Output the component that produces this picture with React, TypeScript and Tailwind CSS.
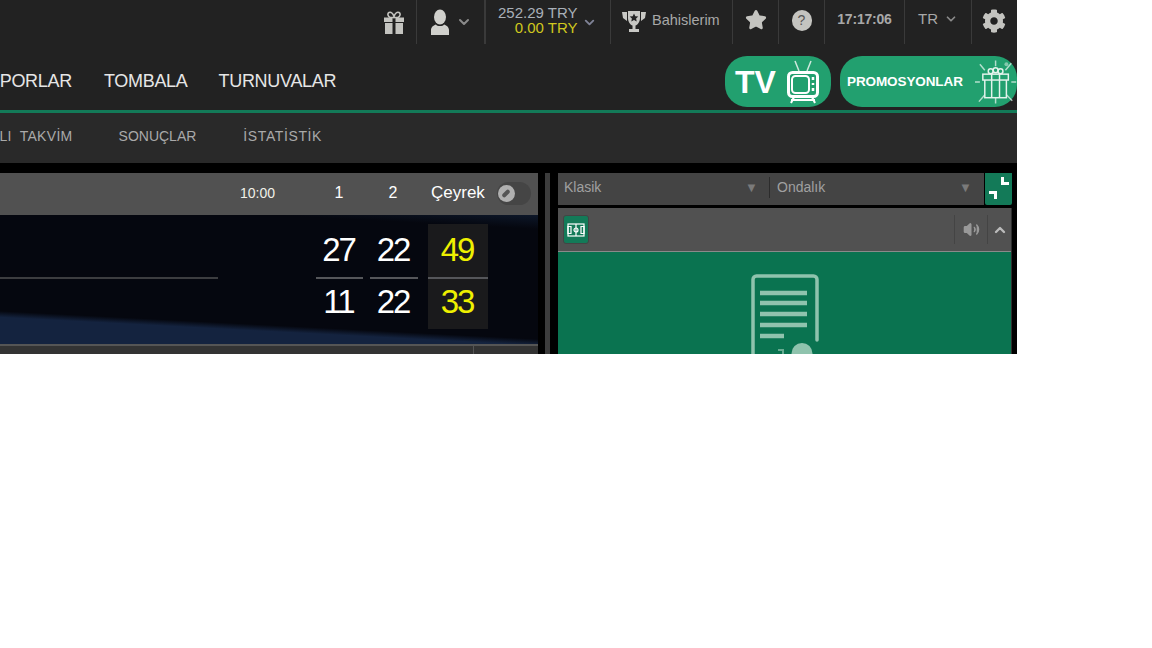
import { ChevronDown, ChevronUp, Star, Volume2 } from 'lucide-react';
import { FaCog } from 'react-icons/fa';

const sans = "font-['Liberation_Sans',Arial,sans-serif]";

function Gift() {
  return (
    <svg width="22" height="24" viewBox="0 0 22 24" fill="#c4c4c0">
      <path d="M6 1.500c2-1 4 1 5 4 1-3 3-5 5-4 2 1.200 1 4-1 5H7C5 5.500 4 2.500 6 1.500z" fill="none" stroke="#c4c4c0" strokeWidth="1.600" />
      <rect x="1" y="6.500" width="8.500" height="4.500" />
      <rect x="12.500" y="6.500" width="8.500" height="4.500" />
      <rect x="2" y="12" width="7.500" height="11" />
      <rect x="12.500" y="12" width="7.500" height="11" />
    </svg>
  );
}

function User() {
  return (
    <svg width="20" height="27" viewBox="0 0 20 27" fill="#d0d0cc">
      <ellipse cx="10" cy="8" rx="6" ry="7.500" />
      <path d="M1 26v-5c0-3 3-5 5-5.500 1 2 7 2 8 0 2 .5 5 2.500 5 5.500v5z" />
    </svg>
  );
}

function Trophy() {
  return (
    <svg width="24" height="25" viewBox="0 0 24 25" fill="#c8c8c4">
      <path d="M6 1h12v7c0 4-2.500 7-4.500 7.500V19H17v3H7v-3h3.500v-3.500C8.500 15 6 12 6 8z" />
      <path d="M5 2H0l1 6 4 3zM19 2h5l-1 6-4 3z" />
      <path d="M12 3.500l1.300 2.700 3 .3-2.200 2 .6 3-2.700-1.500-2.700 1.500.6-3-2.200-2 3-.3z" fill="#222" />
    </svg>
  );
}

function TvIcon() {
  return (
    <svg width="34" height="46" viewBox="0 0 34 46" fill="none" stroke="#fff">
      <path d="M9 2l4 10M25 2l-4 10" stroke="#cfe8dd" strokeWidth="1.500" />
      <rect x="2.500" y="13.500" width="29" height="24" rx="4" strokeWidth="3" />
      <rect x="6" y="17" width="17" height="17" rx="3.500" fill="#22a06f" strokeWidth="2" />
      <path d="M27 18v3M27 24v2M27 29v3" strokeWidth="2.500" />
      <path d="M8 38l-3 6M26 38l3 6M5 41h24" strokeWidth="2" />
    </svg>
  );
}

function PromoIcon() {
  return (
    <svg width="44" height="46" viewBox="0 0 44 46" fill="none" stroke="#e4f3ec" strokeWidth="1.500">
      <path d="M22 1v6M22 39v6M1 23h5M38 23h5M6 5l5 6M38 4l-6 7M5 43l7-8M39 42l-6-6" strokeOpacity="0.75" />
      <rect x="11" y="20" width="22" height="19" fill="#22a06f" />
      <rect x="9" y="15" width="26" height="6" fill="#22a06f" />
      <path d="M18 15v24M26 15v24" />
      <circle cx="17" cy="12" r="2.500" />
      <circle cx="22" cy="11" r="2.500" />
      <circle cx="27" cy="12" r="2.500" />
      <circle cx="33" cy="5" r="2" fill="#e4f3ec" fillOpacity="0.5" stroke="none" />
    </svg>
  );
}

function Pitch() {
  return (
    <svg width="18" height="14" viewBox="0 0 18 14" fill="none" stroke="#fff" strokeWidth="1.200">
      <rect x="1" y="1" width="16" height="12" />
      <path d="M9 1v12" />
      <circle cx="9" cy="7" r="2" />
      <path d="M1 3.500h3v7H1zM14 3.500h3v7h-3z" />
    </svg>
  );
}

function Document() {
  return (
    <svg width="68" height="82" viewBox="0 0 68 82" fill="none" stroke="#8fc3ad">
      <path d="M2 82V5.500C2 3.500 3.500 2 5.500 2h57C64.500 2 66 3.500 66 5.500V66" strokeWidth="3.500" strokeLinecap="round" />
      <path d="M9 19h47M9 29h47M9 40h47M9 51h47" strokeWidth="4.500" />
      <path d="M9 62h24" strokeWidth="4.500" />
      <circle cx="51" cy="79.500" r="10.500" fill="#8fc3ad" stroke="none" />
      <path d="M27 76h5v5" strokeWidth="2" strokeOpacity="0.7" />
    </svg>
  );
}

export default function App() {
  return (
    <div className={`${sans} w-[1017px] h-[354px] overflow-hidden bg-black`}>
      {/* top bar */}
      <div className="h-[44px] bg-[#222] flex justify-end text-[#c4c4c0]">
        <div className="w-[46px] border-r border-[#3a3a3a] flex items-center justify-center pt-px"><Gift /></div>
        <div className="w-[69px] border-r-2 border-[#3a3a3a] flex items-center justify-center gap-[6px]">
          <User />
          <ChevronDown className="w-[16px] h-[16px] text-[#8a8a8a]" strokeWidth={3} />
        </div>
        <div className="w-[125px] border-r border-[#3a3a3a] flex items-center pl-[12px] gap-[4px]">
          <div className="flex flex-col items-end text-[15px] leading-[15px] -mt-[4px]">
            <span className="text-[#a9b0b8]">252.29 TRY</span>
            <span className="text-[#d0c81e]">0.00 TRY</span>
          </div>
          <ChevronDown className="w-[15px] h-[15px] text-[#7f8296]" strokeWidth={3} />
        </div>
        <div className="w-[122px] border-r border-[#3a3a3a] flex items-center pl-[11px] gap-[6px] text-[14.500px]">
          <Trophy />
          <span className="text-[#a8a8a8] pb-[3px]">Bahislerim</span>
        </div>
        <div className="w-[46px] border-r border-[#3a3a3a] flex items-center justify-center pb-[4px]">
          <Star className="w-[22px] h-[22px] text-[#c4c4c0]" fill="#c4c4c0" />
        </div>
        <div className="w-[46px] border-r border-[#3a3a3a] flex items-center justify-center pb-[3px]">
          <div className="w-[20px] h-[21px] rounded-full bg-[#c4c4c0] text-[#555] text-[14px] flex items-center justify-center">?</div>
        </div>
        <div className="w-[80px] border-r border-[#3a3a3a] flex items-center justify-center pb-[6px] text-[14px] font-bold tracking-[-0.2px] text-[#a8a8a8]">17:17:06</div>
        <div className="w-[67px] border-r border-[#3a3a3a] flex items-center justify-center gap-[6px] pb-[6px] text-[15px] text-[#a8a8a8]">
          TR
          <ChevronDown className="w-[14px] h-[14px] text-[#8a8a8a]" strokeWidth={3} />
        </div>
        <div className="w-[45px] flex items-center justify-center pb-[3px] pr-[1px]">
          <FaCog className="w-[24px] h-[24px] text-[#c4c4c0]" />
        </div>
      </div>

      {/* main nav */}
      <div className="h-[69px] bg-[#222] border-b-[3px] border-[#137a58] flex items-start">
        <div className="flex items-center h-[66px] pt-[8px] text-[18px] text-[#e6e6e6] tracking-[-0.3px]">
          <span className="-ml-[12px] mr-[32px]">SPORLAR</span>
          <span className="mr-[31px]">TOMBALA</span>
          <span>TURNUVALAR</span>
        </div>
        <div className="ml-auto flex gap-[9px] pt-[12px]">
          <div className="w-[106px] h-[51px] rounded-[22px] bg-[#22a06f] flex items-center pl-[10px] gap-[10px] text-white">
            <span className="text-[32px] leading-none font-bold">TV</span>
            <TvIcon />
          </div>
          <div className="w-[177px] h-[51px] rounded-[22px] bg-[#22a06f] flex items-center pl-[7px] gap-[11px] text-white">
            <span className="text-[13.500px] font-bold tracking-[-0.1px] pt-[2px]">PROMOSYONLAR</span>
            <PromoIcon />
          </div>
        </div>
      </div>

      {/* sub nav */}
      <div className="h-[50px] bg-[#292929] flex items-center pb-[4px] text-[14px] text-[#a9a9a9]">
        <span className="-ml-[31px] mr-[46px] tracking-[0.3px] [word-spacing:4px]">CANLI TAKVİM</span>
        <span className="mr-[47px]">SONUÇLAR</span>
        <span className="tracking-[0.6px]">İSTATİSTİK</span>
      </div>

      {/* content */}
      <div className="flex pt-[10px] bg-black">
        <div className="w-[538px] h-[181px] flex flex-col">
          <div className="h-[42px] bg-[#515151] flex items-center text-white pb-[2px]">
            <span className="ml-[240px] w-[36px] text-[14px] text-[#f0f0e8]">10:00</span>
            <span className="ml-[50px] w-[26px] text-center text-[16px]">1</span>
            <span className="ml-[28px] w-[26px] text-center text-[16px]">2</span>
            <span className="ml-[25px] text-[17px]">Çeyrek</span>
            <div className="ml-[12px] w-[34px] h-[23px] rounded-full bg-[#454545] flex items-center pl-[1px]">
              <div className="w-[17px] h-[17px] rounded-full bg-[#b0b0b0] flex items-center justify-center">
                <div className="w-[4px] h-[9px] bg-[#555] rotate-45 rounded-sm" />
              </div>
            </div>
          </div>
          <div className="h-[129px] bg-[linear-gradient(183deg,#0d1729_0%,#05070f_9%,#05070f_79%,#14233f_83%,#14233f_100%)] flex flex-col relative pt-[9px]">
            <div className="absolute left-0 top-[62px] w-[218px] h-[2px] bg-[#3c3d40]" />
            <div className="flex h-[55px] text-[33px] tracking-[-2px] leading-[52px] text-center">
              <div className="ml-[316px] w-[47px] pr-[2px] border-b-2 border-[#55565a] text-white">27</div>
              <div className="ml-[7px] w-[48px] pr-[2px] border-b-2 border-[#55565a] text-white">22</div>
              <div className="ml-[10px] w-[60px] pr-[2px] border-b-2 border-[#55565a] bg-[#1a1a1c] text-[#eef000]">49</div>
            </div>
            <div className="flex h-[50px] text-[33px] tracking-[-2px] leading-[46px] text-center">
              <div className="ml-[316px] w-[47px] pr-[2px] text-white">11</div>
              <div className="ml-[7px] w-[48px] pr-[2px] text-white">22</div>
              <div className="ml-[10px] w-[60px] pr-[2px] bg-[#1a1a1c] text-[#eef000]">33</div>
            </div>
          </div>
          <div className="flex-1 bg-[#333] border-t-2 border-[#555] flex justify-end">
            <div className="w-[65px] border-l border-[#555]" />
          </div>
        </div>

        <div className="ml-[7px] w-[5px] bg-[#3c3c3c]" />

        <div className="ml-[8px] w-[459px] flex flex-col">
          <div className="flex h-[35px]">
            <div className="w-[426px] h-[32px] bg-[#444] flex items-center text-[14px] text-[#a0a0a0] pb-[3px]">
              <span className="w-[187px] pl-[6px]">Klasik</span>
              <span className="text-[#7a7a7a] text-[13px] w-[24px]">▼</span>
              <div className="w-px h-[21px] bg-[#2c2c2c]" />
              <span className="w-[189px] pl-[7px]">Ondalık</span>
              <span className="text-[#7a7a7a] text-[13px]">▼</span>
            </div>
            <div className="ml-px w-[27px] h-[32px] rounded-b-[2px] bg-[#137a58] relative">
              <div className="absolute right-[3px] top-[4px] w-[8px] h-[8px] border-l-[3px] border-b-[3px] border-white" />
              <div className="absolute left-[4px] bottom-[6px] w-[8px] h-[8px] border-r-[3px] border-t-[3px] border-white" />
            </div>
          </div>
          <div className="w-[454px] flex-1 border-r border-[#2e2e2e] flex flex-col">
            <div className="h-[44px] bg-[#515151] border-b border-[#8a8a8a] flex items-center">
              <div className="ml-[5px] w-[26px] h-[29px] rounded-[3px] bg-[#137a58] border border-[#444] flex items-center justify-center"><Pitch /></div>
              <div className="ml-auto w-[33px] h-[29px] border-l border-[#444] flex items-center justify-center">
                <Volume2 className="w-[17px] h-[17px] text-[#999]" fill="#999" />
              </div>
              <div className="w-[24px] h-[29px] border-l border-[#444] flex items-center justify-center">
                <ChevronUp className="w-[16px] h-[16px] text-[#bbb]" strokeWidth={3.500} />
              </div>
            </div>
            <div className="flex-1 bg-[#0a7350] flex justify-center pt-[22px] overflow-hidden pl-[1px]">
              <Document />
            </div>
          </div>
        </div>
      </div>
    </div>
  );
}
